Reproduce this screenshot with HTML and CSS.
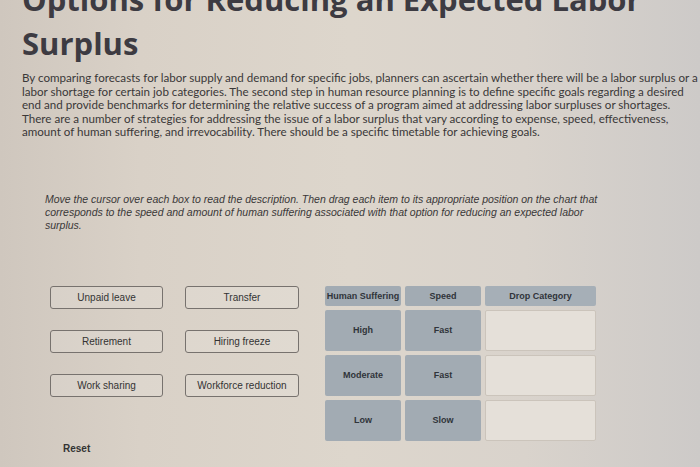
FILE: index.html
```html
<!DOCTYPE html>
<html lang="en">
<head>
<meta charset="utf-8">
<title>Options for Reducing an Expected Labor Surplus</title>
<link rel="stylesheet" href="styles.css">
</head>
<body>
<div class="page">
  <h1 class="title">Options for Reducing an Expected Labor<br>Surplus</h1>
  <p class="intro">By comparing forecasts for labor supply and demand for specific jobs, planners can ascertain whether there will be a labor surplus or a<br>labor shortage for certain job categories. The second step in human resource planning is to define specific goals regarding a desired<br>end and provide benchmarks for determining the relative success of a program aimed at addressing labor surpluses or shortages.<br>There are a number of strategies for addressing the issue of a labor surplus that vary according to expense, speed, effectiveness,<br>amount of human suffering, and irrevocability. There should be a specific timetable for achieving goals.</p>
  <p class="instructions">Move the cursor over each box to read the description. Then drag each item to its appropriate position on the chart that<br>corresponds to the speed and amount of human suffering associated with that option for reducing an expected labor<br>surplus.</p>
  <div class="activity">
    <div class="bank">
      <div class="items">
        <div class="item">Unpaid leave</div>
        <div class="item">Transfer</div>
        <div class="item">Retirement</div>
        <div class="item">Hiring freeze</div>
        <div class="item">Work sharing</div>
        <div class="item">Workforce reduction</div>
      </div>
      <div class="reset">Reset</div>
    </div>
    <div class="chart">
      <div class="cell head">Human Suffering</div>
      <div class="cell head">Speed</div>
      <div class="cell head drophead">Drop Category</div>
      <div class="cell">High</div>
      <div class="cell">Fast</div>
      <div class="drop"></div>
      <div class="cell">Moderate</div>
      <div class="cell">Fast</div>
      <div class="drop"></div>
      <div class="cell">Low</div>
      <div class="cell">Slow</div>
      <div class="drop"></div>
    </div>
  </div>
</div>
</body>
</html>
```
FILE: styles.css
```css
html, body {
  margin: 0;
  height: 100%;
  overflow: hidden;
}
body {
  background: linear-gradient(90deg, #cfc7be 0%, #d9d1c7 20%, #ddd6cc 50%, #d9d3cc 75%, #cdcac8 100%);
  font-family: "Liberation Sans", Arial, sans-serif;
  color: #333;
}
.page {
  padding-left: 22px;
}
.title {
  margin: -23px 0 0;
  font: 700 31px/44px "Open Sans", sans-serif;
  color: #3d3b42;
  white-space: nowrap;
}
.intro {
  margin: 6px 0 0;
  font: 400 11.6px/13.5px Lato, sans-serif;
  color: #3a3838;
  white-space: nowrap;
}
.instructions {
  margin: 54px 0 0 23px;
  font: italic 400 10.5px/13px "Liberation Sans", Arial, sans-serif;
  color: #3a3838;
  white-space: nowrap;
}
.activity {
  display: flex;
  margin-top: 54px;
  padding-left: 28px;
}
.bank {
  display: flex;
  flex-direction: column;
}
.items {
  display: grid;
  grid-template-columns: 113px 114px;
  column-gap: 22px;
  row-gap: 21px;
}
.item {
  box-sizing: border-box;
  height: 23px;
  border: 1px solid #77726e;
  border-radius: 3px;
  background: rgba(255, 255, 255, 0.12);
  display: flex;
  align-items: center;
  justify-content: center;
  font-size: 10px;
  color: #333;
}
.reset {
  margin: 46px 0 0 13px;
  font-weight: 700;
  font-size: 10px;
  color: #333;
}
.chart {
  margin-left: 26px;
  display: grid;
  grid-template-columns: 76px 76px 111px;
  grid-template-rows: 20px 41px 41px 41px;
  column-gap: 4px;
  row-gap: 4px;
  align-self: flex-start;
}
.cell {
  background: #a2abb3;
  border-radius: 2px;
  display: flex;
  align-items: center;
  justify-content: center;
  font-weight: 700;
  font-size: 9px;
  color: #30343a;
}
.head {
  white-space: nowrap;
}
.drophead {
  background: #a6afb7;
}
.drop {
  box-sizing: border-box;
  border: 1px solid #cbc4bb;
  border-radius: 2px;
  background: #e5e0d9;
}
```
